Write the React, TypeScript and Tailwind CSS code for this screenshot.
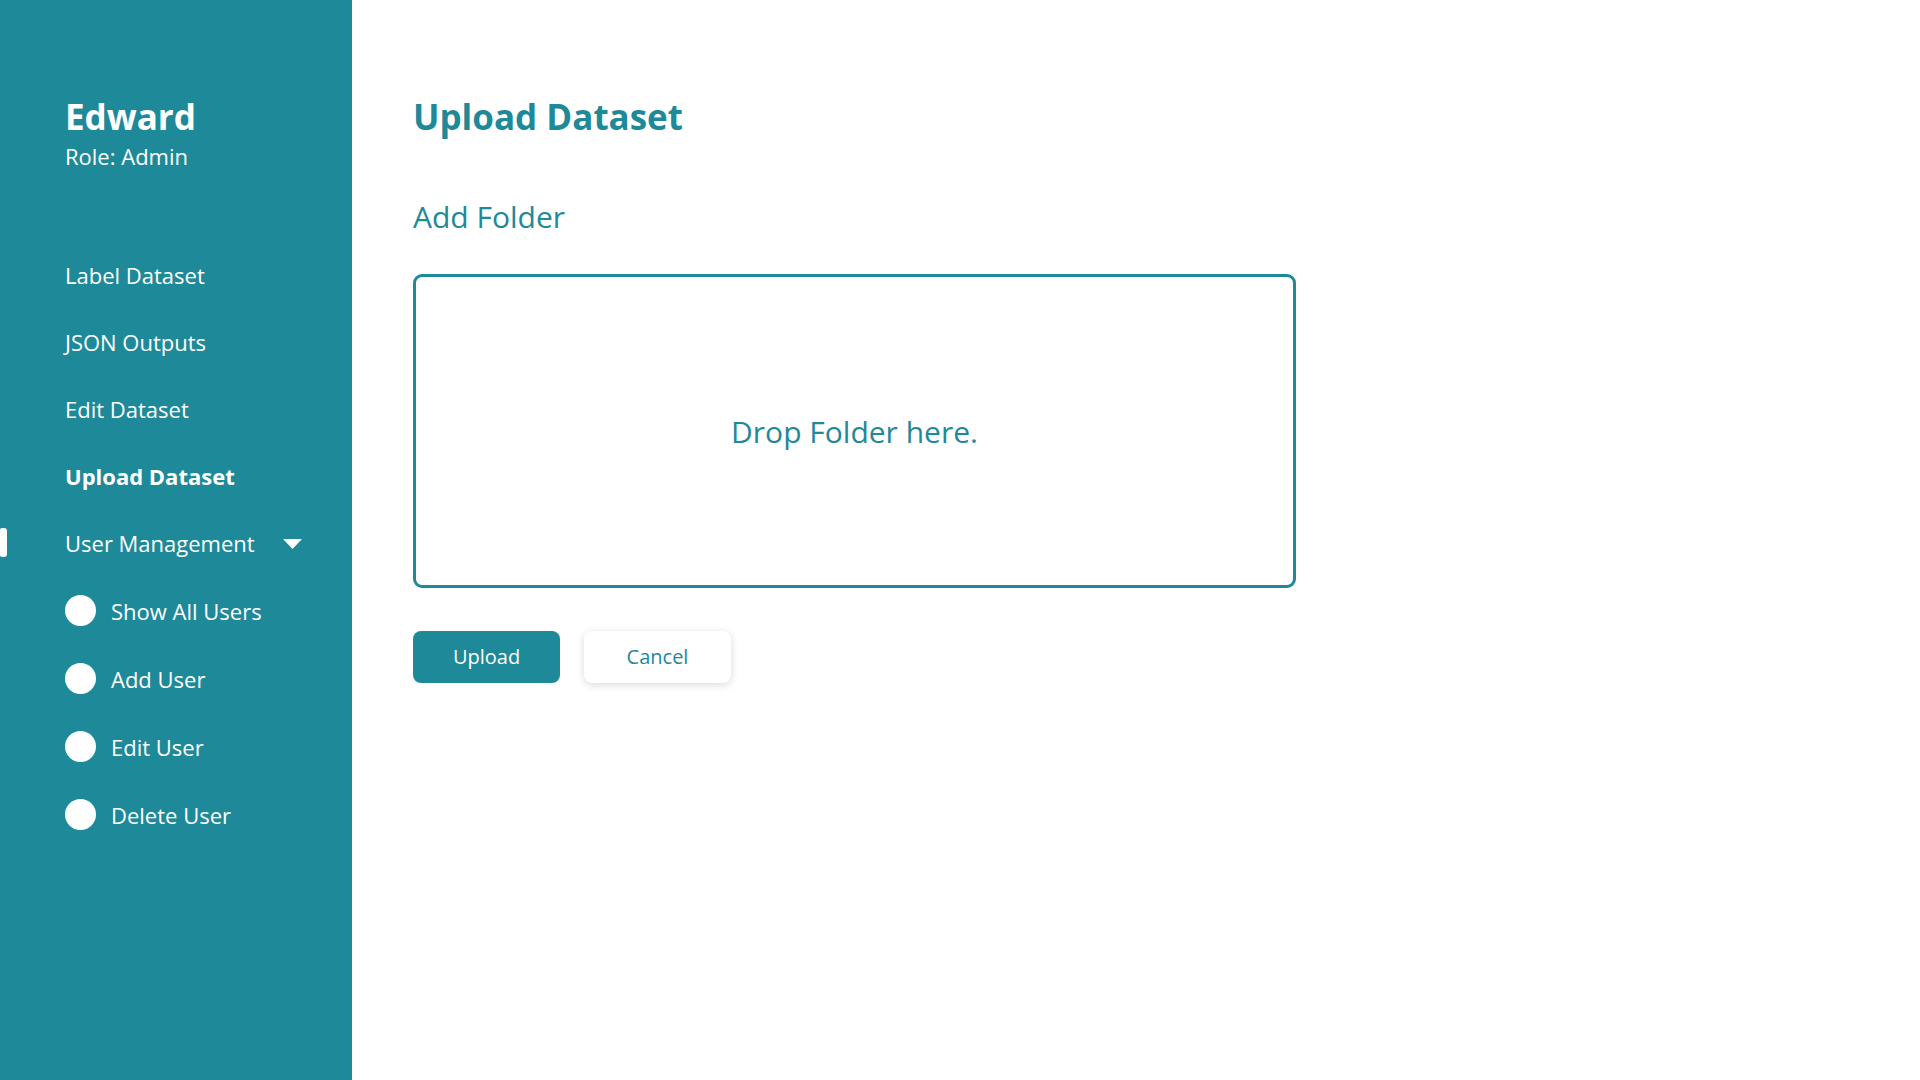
import React from "react";

const font = { fontFamily: '"Open Sans", "Noto Sans", sans-serif' };

function NavItem({ label, bold }: { label: string; bold?: boolean }) {
  return (
    <div className={`h-[31px] flex items-center text-[22px] leading-[30px] text-white ${bold ? "font-bold" : "font-normal"}`}>
      {label}
    </div>
  );
}

function SubItem({ label }: { label: string }) {
  return (
    <div className="h-[31px] flex items-center gap-[15px] text-[22px] leading-[30px] text-white">
      <span className="w-[31px] h-[31px] rounded-full bg-white shrink-0" />
      <span>{label}</span>
    </div>
  );
}

export default function App() {
  return (
    <div className="flex w-full min-h-[1080px] bg-white" style={font}>
      <aside className="w-[352px] shrink-0 bg-[#1e8999] min-h-[1080px] pl-[65px] pt-[95px] relative">
        <div className="text-[35px] leading-[44px] font-bold text-white">Edward</div>
        <div className="mt-[2px] text-[22px] leading-[30px] text-white">Role: Admin</div>
        <nav className="mt-[88px] flex flex-col gap-[36px]">
          <NavItem label="Label Dataset" />
          <NavItem label="JSON Outputs" />
          <NavItem label="Edit Dataset" />
          <NavItem label="Upload Dataset" bold />
          <div className="flex flex-col gap-[37px]">
            <div className="relative h-[31px] flex items-center justify-between pr-[50px] text-[22px] leading-[30px] text-white">
              <span className="absolute left-[-65px] top-[1px] w-[7px] h-[29px] rounded-r-[3px] rounded-l-[2px] bg-white" />
              <span>User Management</span>
              <svg width="19" height="10" viewBox="0 0 19 10" className="mt-[2px]">
                <polygon points="0,0 19,0 9.5,10" fill="#ffffff" />
              </svg>
            </div>
            <SubItem label="Show All Users" />
            <SubItem label="Add User" />
            <SubItem label="Edit User" />
            <SubItem label="Delete User" />
          </div>
        </nav>
      </aside>
      <main className="flex-1 pl-[61px] pt-[95px]">
        <h1 className="text-[35px] leading-[44px] font-bold text-[#1e8999]">Upload Dataset</h1>
        <h2 className="mt-[58px] text-[30px] leading-[40px] font-normal text-[#1e8999]">Add Folder</h2>
        <div className="mt-[37px] w-[883px] h-[314px] border-[3px] border-[#1e8999] rounded-[9px] flex items-center justify-center">
          <span className="pt-[2px] text-[30px] leading-[40px] text-[#1e8999]">Drop Folder here.</span>
        </div>
        <div className="mt-[43px] flex gap-[24px]">
          <button className="w-[147px] h-[52px] rounded-[8px] bg-[#1e8999] text-white text-[20px]">Upload</button>
          <button className="w-[147px] h-[52px] rounded-[8px] bg-white text-[#1e8999] text-[20px] shadow-[0_2px_8px_rgba(0,0,0,0.15)]">Cancel</button>
        </div>
      </main>
    </div>
  );
}
